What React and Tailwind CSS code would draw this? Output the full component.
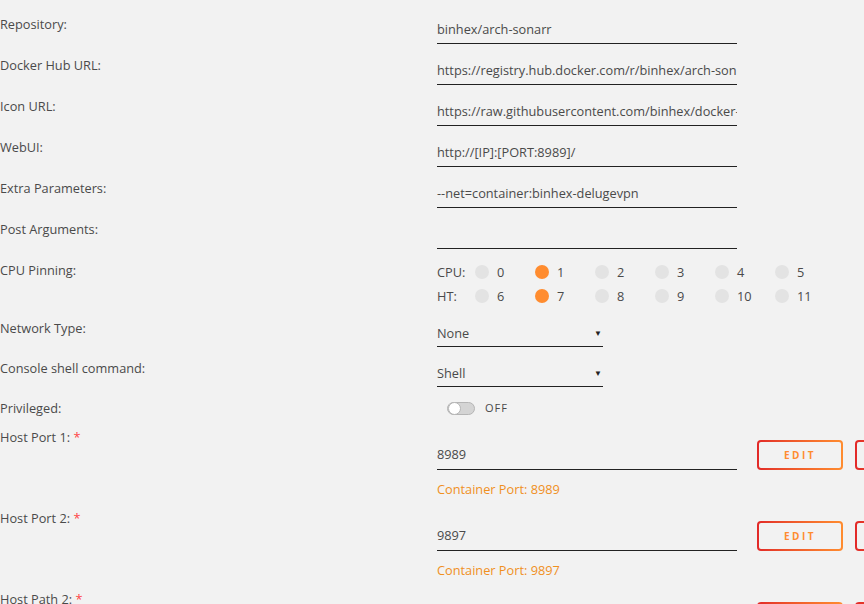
const FONT = { fontFamily: '"Open Sans", "Noto Sans", sans-serif' };

function TextRow({ label, value }) {
  return (
    <div className="flex h-[41px]">
      <div className="w-[437px] shrink-0 pt-[13px] text-[12.75px] leading-[14px]">{label}</div>
      <div className="h-[40px] w-[300px] overflow-hidden whitespace-nowrap border-b border-[#222] pt-[18px] text-[12.75px] leading-[14px]">
        {value}
      </div>
    </div>
  );
}

function SelectRow({ label, value }) {
  return (
    <div className="flex h-[40px]">
      <div className="w-[437px] shrink-0 pt-[13px] text-[12.75px] leading-[14px]">{label}</div>
      <div className="flex h-[39px] w-[166px] items-start justify-between border-b border-[#222] pt-[18px] text-[12.75px] leading-[14px]">
        <span>{value}</span>
        <span className="pr-[1px] text-[8px] text-[#222]">▼</span>
      </div>
    </div>
  );
}

function Core({ n, on }) {
  return (
    <div className="flex w-[60px] items-center gap-[8px]">
      <span className={`h-[14px] w-[14px] rounded-full ${on ? 'bg-[#ff8c2f]' : 'bg-[#e3e3e3]'}`} />
      <span>{n}</span>
    </div>
  );
}

function EditButton({ text }) {
  return (
    <div className="h-[30px] w-[86px] rounded-[4px] bg-gradient-to-r from-[#e22828] to-[#ff8c2f] p-[2px]">
      <div className="flex h-full w-full items-center justify-center rounded-[2px] bg-[#f2f2f2]">
        {text && (
          <span className="text-[10px] font-bold tracking-[2.5px] text-[#ff8c2f]">{text}</span>
        )}
      </div>
    </div>
  );
}

function PortRow({ label, value, port }) {
  return (
    <div className="flex h-[81px]">
      <div className="w-[437px] shrink-0 pt-[7px] text-[12.75px] leading-[14px]">
        {label} <span className="text-[#f44]">*</span>
      </div>
      <div className="w-[300px] shrink-0">
        <div className="h-[47px] border-b border-[#222] pt-[24px] text-[12.75px] leading-[14px]">{value}</div>
        <div className="mt-[12px] text-[12.75px] leading-[14px] text-[#f0901e]">{port}</div>
      </div>
      <div className="ml-[20px] mt-[17px] shrink-0">
        <EditButton text="EDIT" />
      </div>
      <div className="ml-[12px] mt-[17px] shrink-0">
        <EditButton />
      </div>
    </div>
  );
}

export default function App() {
  return (
    <div className="h-[604px] w-[864px] overflow-hidden bg-[#f2f2f2] pt-[4px] text-[#4a4a4a]" style={FONT}>
      <TextRow label="Repository:" value="binhex/arch-sonarr" />
      <TextRow label="Docker Hub URL:" value="https://registry.hub.docker.com/r/binhex/arch-son" />
      <TextRow label="Icon URL:" value="https://raw.githubusercontent.com/binhex/docker-" />
      <TextRow label="WebUI:" value="http://[IP]:[PORT:8989]/" />
      <TextRow label="Extra Parameters:" value="--net=container:binhex-delugevpn" />
      <TextRow label="Post Arguments:" value="" />

      <div className="flex h-[58px]">
        <div className="w-[437px] shrink-0 pt-[13px] text-[12.75px] leading-[14px]">CPU Pinning:</div>
        <div className="flex flex-col gap-[10px] pt-[15px] text-[12.75px] leading-[14px]">
          <div className="flex h-[14px] items-center">
            <span className="w-[38px]">CPU:</span>
            {[0, 1, 2, 3, 4, 5].map((n) => (
              <Core key={n} n={n} on={n === 1} />
            ))}
          </div>
          <div className="flex h-[14px] items-center">
            <span className="w-[38px]">HT:</span>
            {[6, 7, 8, 9, 10, 11].map((n) => (
              <Core key={n} n={n} on={n === 7} />
            ))}
          </div>
        </div>
      </div>

      <SelectRow label="Network Type:" value="None" />
      <SelectRow label="Console shell command:" value="Shell" />

      <div className="flex h-[35px]">
        <div className="w-[437px] shrink-0 pt-[13px] text-[12.75px] leading-[14px]">Privileged:</div>
        <div className="ml-[10px] flex items-center gap-[10px] self-start pt-[12px]">
          <div className="relative h-[13px] w-[28px] rounded-full border border-[#b5b5b5] bg-[#d4d4d4]">
            <span className="absolute left-0 top-[-1px] h-[13px] w-[13px] rounded-full border border-[#b5b5b5] bg-white" />
          </div>
          <span className="text-[11px] tracking-[1px]">OFF</span>
        </div>
      </div>

      <PortRow label="Host Port 1:" value="8989" port="Container Port: 8989" />
      <PortRow label="Host Port 2:" value="9897" port="Container Port: 9897" />
      <PortRow label="Host Path 2:" value="/config" port="Container Path: /config" />
    </div>
  );
}
